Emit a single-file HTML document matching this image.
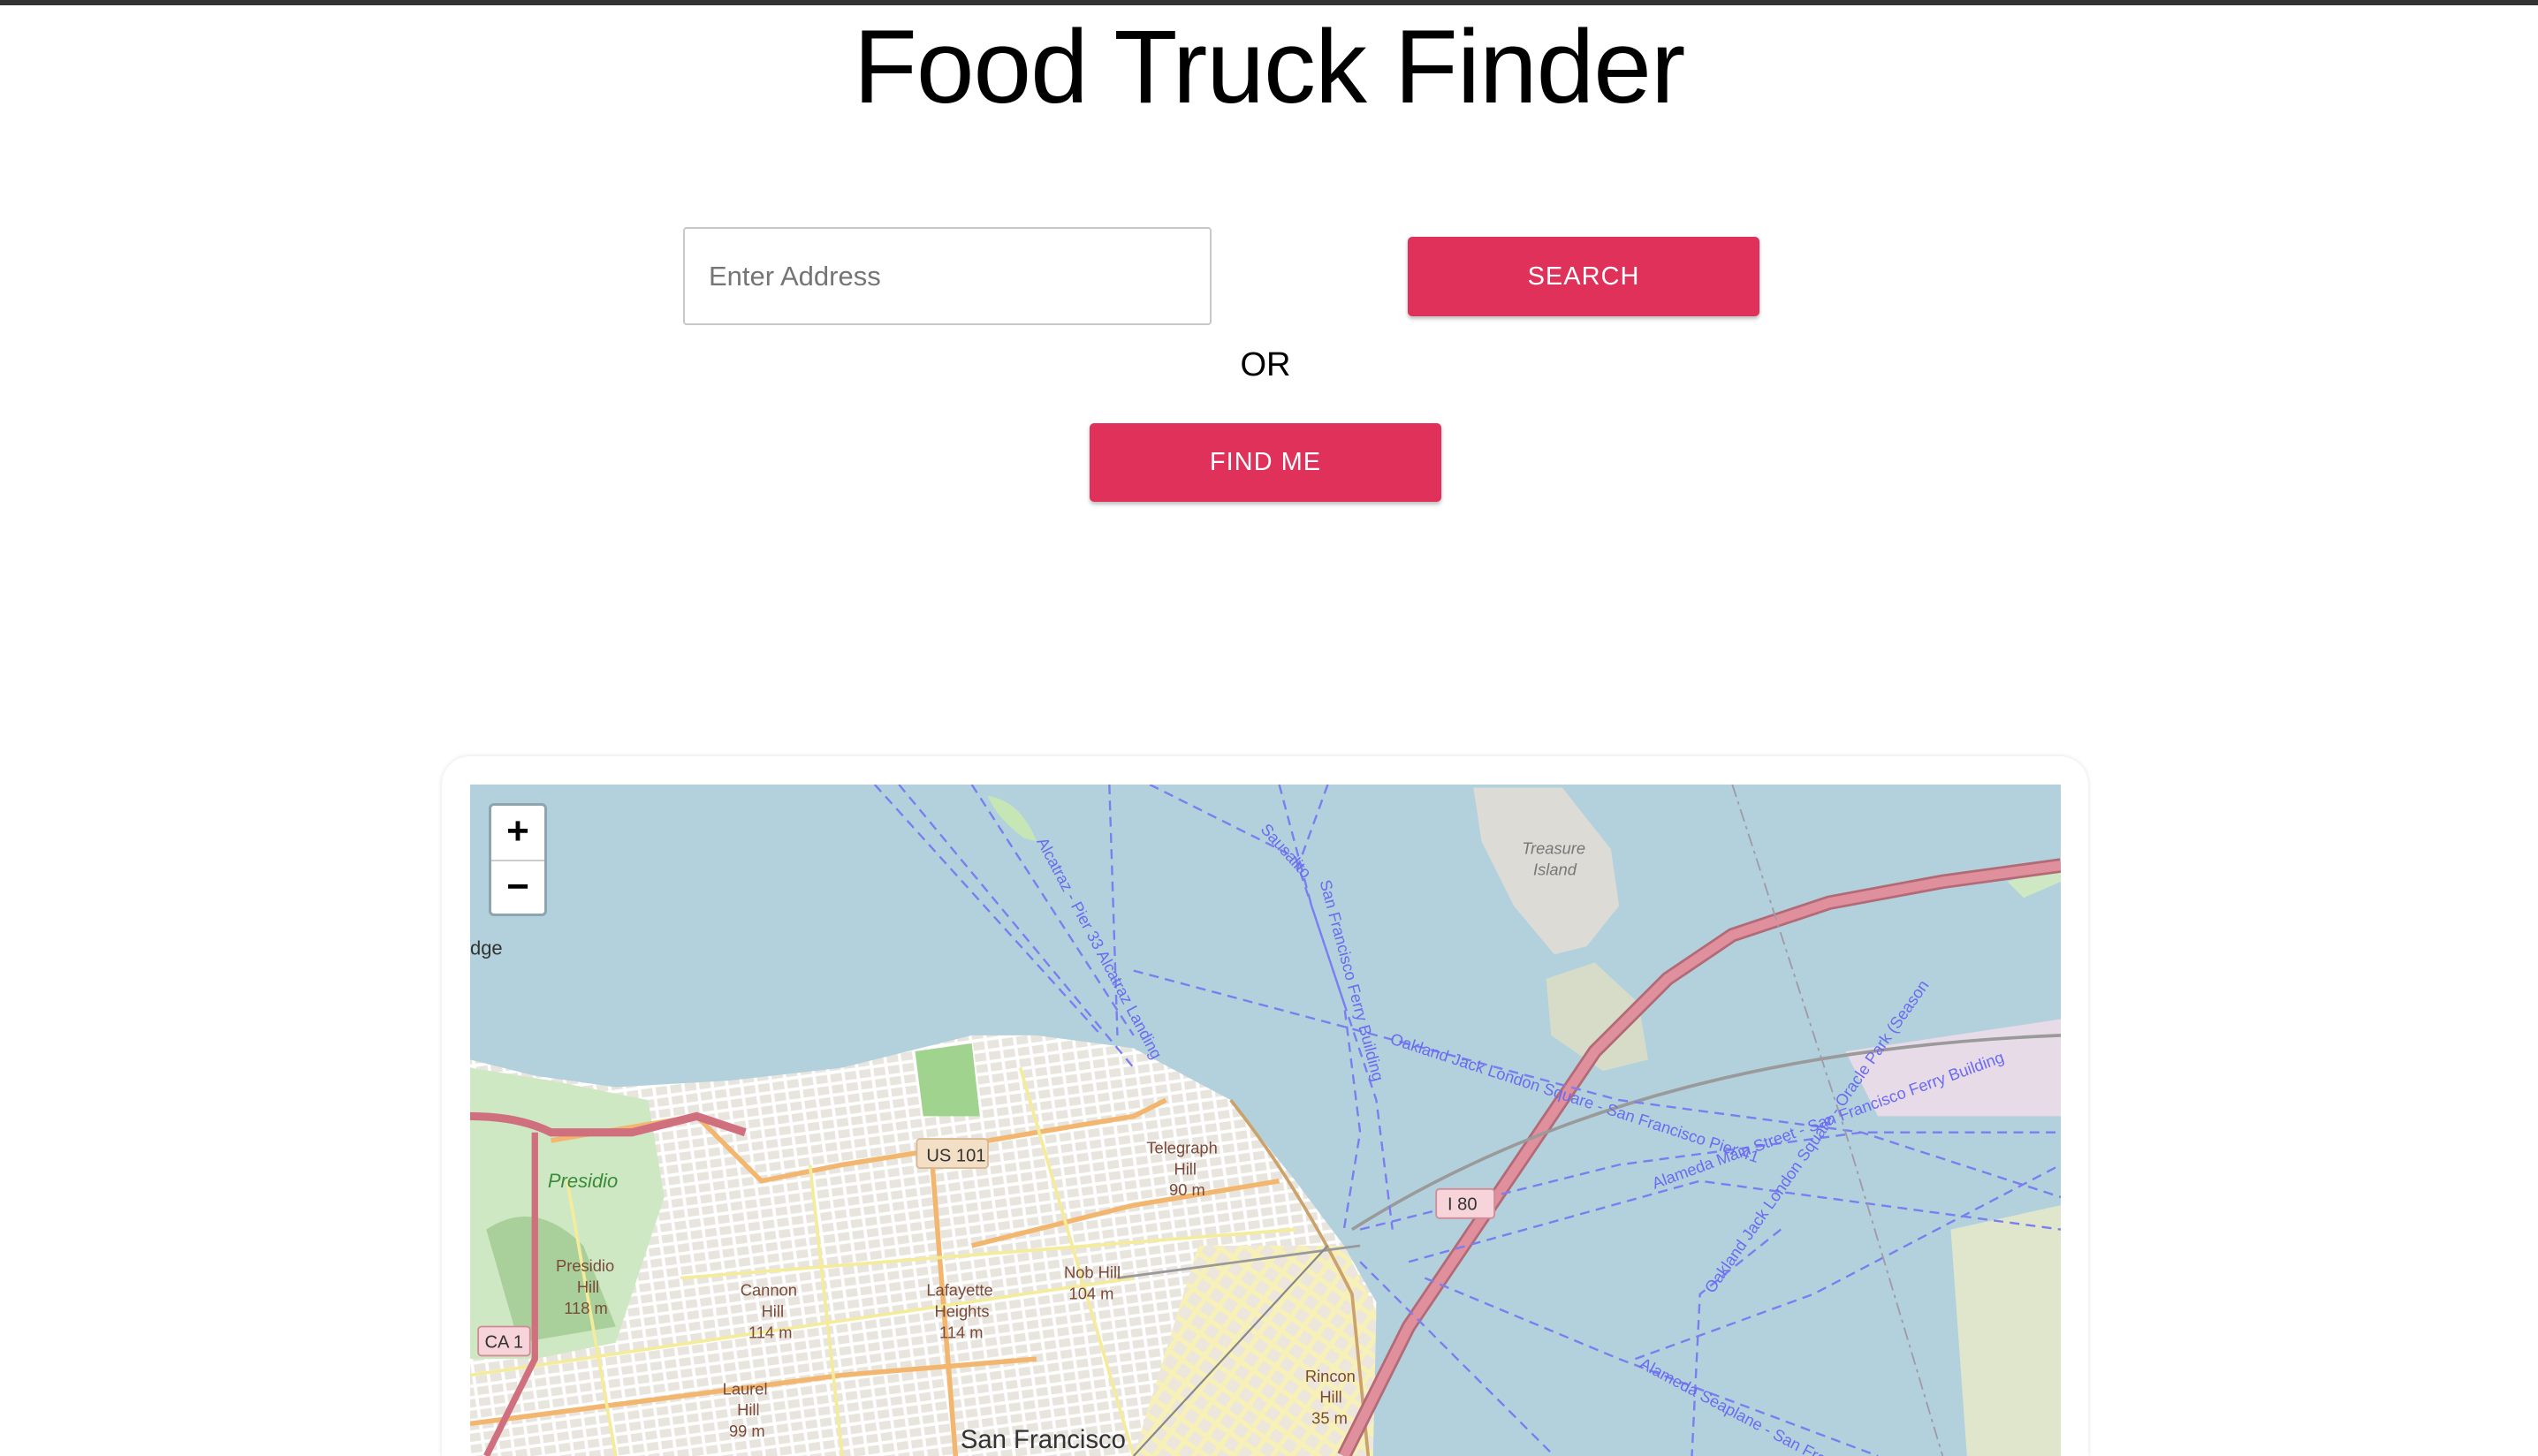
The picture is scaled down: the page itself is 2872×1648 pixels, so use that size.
<!DOCTYPE html>
<html><head><meta charset="utf-8"><style>
html,body{margin:0;padding:0;background:#fff;width:2872px;height:1648px;overflow:hidden;font-family:"Liberation Sans",Arial,sans-serif;position:relative}
.top{position:absolute;left:0;top:0;width:2872px;height:6px;background:#333}
h1{position:absolute;left:0;width:2872px;top:6px;margin:0;text-align:center;font-weight:normal;font-size:118px;line-height:140px;color:#000;letter-spacing:-1px}
.inp{position:absolute;left:773px;top:257px;width:598px;height:111px;border:2px solid #c8c8c8;border-radius:4px;box-sizing:border-box}
.inp span{position:absolute;left:27px;top:36px;font-size:31px;color:#757575}
.btn{position:absolute;background:#e0315a;color:#fff;border-radius:5px;font-size:29px;text-align:center;box-shadow:0 3px 4px rgba(0,0,0,.25);letter-spacing:1px}
.or{position:absolute;left:1332px;width:200px;top:392px;text-align:center;font-size:38px}
.card{position:absolute;left:500px;top:856px;width:1863px;height:792px;border-radius:32px 32px 0 0;background:#fff;box-shadow:0 0 6px rgba(0,0,0,.12)}
.map{position:absolute;left:532px;top:888px;width:1800px;height:760px;overflow:hidden;background:#b3d1dc}
.zoom{position:absolute;left:553px;top:909px;width:66px;height:128px;border:3px solid #8ea4ae;border-radius:6px;box-sizing:border-box;background:#fff}
.zoom div{height:61px;text-align:center;font-size:44px;font-weight:bold;line-height:58px}
</style></head><body>
<div class="top"></div>
<h1>Food Truck Finder</h1>
<div class="inp"><span>Enter Address</span></div>
<div class="btn" style="left:1593px;top:268px;width:398px;height:90px;line-height:90px">SEARCH</div>
<div class="or">OR</div>
<div class="btn" style="left:1233px;top:479px;width:398px;height:89px;line-height:89px">FIND ME</div>
<div class="card"></div>
<div class="map">
<svg width="1800" height="760" viewBox="290 485 983 415" preserveAspectRatio="none" xmlns="http://www.w3.org/2000/svg" font-family="Liberation Sans, sans-serif">
<defs>
<pattern id="g" width="9" height="7" patternUnits="userSpaceOnUse" patternTransform="rotate(-8)">
<rect width="9" height="7" fill="#ffffff"/><rect x="1" y="1" width="7" height="5" fill="#e8e4de"/>
</pattern>
<pattern id="g2" width="10" height="10" patternUnits="userSpaceOnUse" patternTransform="rotate(35)">
<rect width="10" height="10" fill="#f7f1b8"/><rect x="1.5" y="1.5" width="7" height="7" fill="#ece6dc"/>
</pattern>
</defs>
<path d="M290 655 L330 665 L380 672 L450 668 L520 660 L560 650 L600 640 L640 640 L700 648 L760 680 L800 730 L830 770 L850 805 L848 850 L845 900 L290 900Z" fill="url(#g)"/>
<path d="M740 770 L830 770 L850 810 L848 900 L700 900Z" fill="url(#g2)"/>
<path d="M290 660 L340 668 L400 680 L410 740 L380 830 L330 840 L290 840Z" fill="#cfe8c4"/>
<path d="M300 760 Q330 740 360 770 L380 820 L320 830Z" fill="#a9d09a"/>
<path d="M565 650 L600 645 L605 690 L570 690Z" fill="#9fd38e"/>
<path d="M610 492 Q630 495 640 520 L632 518 Q615 505 610 492Z" fill="#c7e6b5"/>
<path d="M910 487 L965 487 L995 525 L1000 560 L980 585 L960 590 L935 560 L915 520Z" fill="#dcdbd6"/>
<path d="M955 605 L985 595 L1012 620 L1018 655 L990 662 L958 640Z" fill="#d6dcc8"/>
<path d="M1140 650 L1273 630 L1273 690 L1160 690Z" fill="#e8dbe8"/>
<path d="M1205 760 L1273 745 L1273 900 L1215 900 L1210 830Z" fill="#dfe6cc"/>
<path d="M1240 545 L1273 535 L1273 545 L1250 555Z" fill="#cfe8c4"/>
<g fill="none" stroke="#f2b66f" stroke-width="3">
<path d="M340 705 L430 690 L470 730 L520 720 L570 712 L640 700 L700 690 L720 680"/>
<path d="M575 712 L590 900"/><path d="M290 880 L520 850 L640 840"/>
<path d="M600 770 L700 745 L790 730"/>
</g>
<g fill="none" stroke="#f4ec9b" stroke-width="2">
<path d="M290 850 L700 790"/><path d="M350 730 L380 900"/><path d="M500 720 L520 900"/><path d="M420 790 L800 760"/><path d="M630 660 L700 900"/>
</g>
<path d="M290 690 Q320 690 340 700 L390 700 L430 690 L460 700" stroke="#d0707f" stroke-width="5" fill="none"/>
<path d="M330 700 L330 840 L300 900" stroke="#d0707f" stroke-width="4" fill="none"/>
<path d="M760 680 Q800 730 835 800 L845 900" stroke="#caa26a" stroke-width="2" fill="none"/>
<path d="M830 900 L870 820 L985 650 L1030 605 L1070 578 L1130 558 L1200 545 L1273 535" stroke="#b26b76" stroke-width="9" fill="none"/>
<path d="M830 900 L870 820 L985 650 L1030 605 L1070 578 L1130 558 L1200 545 L1273 535" stroke="#e08f9c" stroke-width="6" fill="none"/>
<path d="M835 760 Q930 700 1050 670 Q1150 645 1273 640" stroke="#9a9a9a" stroke-width="2" fill="none"/>
<path d="M690 790 L840 770" stroke="#999" stroke-width="1.5" fill="none"/>
<path d="M700 900 L820 770" stroke="#888" stroke-width="1.2" fill="none"/>
<g fill="none" stroke="#7a7ef0" stroke-width="1.3" stroke-dasharray="6 4">
<path d="M540 485 L680 640"/><path d="M555 485 L700 660"/><path d="M600 485 L700 640"/><path d="M685 485 L690 640"/>
<path d="M710 485 L800 530 L830 620 L840 700 L830 760"/><path d="M790 485 L810 560 L850 680 L860 760"/>
<path d="M820 485 L800 540"/><path d="M700 600 L850 640 L1000 680 L1150 700 L1273 740"/>
<path d="M840 760 L1000 720 L1150 700 L1273 700"/><path d="M870 780 L1050 730 L1273 760"/>
<path d="M1100 760 L1050 800 L1045 900"/><path d="M880 790 L1000 840 L1160 900"/><path d="M1010 840 L1120 800 L1273 720"/>
<path d="M840 780 L960 900"/>
</g>
<path d="M1070 485 L1140 700 L1200 900" stroke="#a09aa8" stroke-width="1" stroke-dasharray="8 3 2 3" fill="none"/>
<g font-size="10" fill="#6b6bf0">
<text transform="translate(858,645) rotate(18)">Oakland Jack London Square - San Francisco Pier 41</text>
<text transform="translate(1022,735) rotate(-20)">Alameda Main Street - San Francisco Ferry Building</text>
<text transform="translate(1058,800) rotate(-55)">Oakland Jack London Square - Oracle Park (Season</text>
<text transform="translate(1012,845) rotate(28)">Alameda Seaplane - San Franc</text>
<text transform="translate(640,520) rotate(62)">Alcatraz - Pier 33 Alcatraz Landing</text>
<text transform="translate(815,545) rotate(75)">San Francisco Ferry Building</text>
<text transform="translate(778,513) rotate(48)">Sausalito</text>
</g>
<g font-size="10" fill="#7a4a3a">
<text x="708" y="713">Telegraph</text><text x="725" y="726">Hill</text><text x="722" y="739">90 m</text>
<text x="657" y="790">Nob Hill</text><text x="660" y="803">104 m</text>
<text x="457" y="801">Cannon</text><text x="470" y="814">Hill</text><text x="462" y="827">114 m</text>
<text x="572" y="801">Lafayette</text><text x="577" y="814">Heights</text><text x="580" y="827">114 m</text>
<text x="343" y="786">Presidio</text><text x="356" y="799">Hill</text><text x="348" y="812">118 m</text>
<text x="806" y="854">Rincon</text><text x="815" y="867">Hill</text><text x="810" y="880">35 m</text>
<text x="446" y="862">Laurel</text><text x="455" y="875">Hill</text><text x="450" y="888">99 m</text>
</g>
<text x="338" y="734" font-size="12" fill="#3a8a3a" font-style="italic">Presidio</text>
<text x="940" y="528" font-size="10" fill="#777" font-style="italic">Treasure</text><text x="947" y="541" font-size="10" fill="#777" font-style="italic">Island</text>
<text x="593" y="895" font-size="16" fill="#333">San Francisco</text>
<text x="290" y="590" font-size="12" fill="#333">dge</text>
<rect x="566" y="704" width="44" height="18" rx="2" fill="#f3dfc6" stroke="#d8b890"/><text x="572" y="718" font-size="11" fill="#333">US 101</text>
<rect x="887" y="735" width="36" height="18" rx="2" fill="#f6d4d9" stroke="#d08b96"/><text x="894" y="748" font-size="11" fill="#333">I 80</text>
<rect x="295" y="820" width="32" height="18" rx="2" fill="#f6d4d9" stroke="#d08b96"/><text x="299" y="833" font-size="11" fill="#333">CA 1</text>
</svg>
</div>
<div class="zoom"><div style="border-bottom:2px solid #ccc">+</div><div>&#8722;</div></div>
</body></html>
